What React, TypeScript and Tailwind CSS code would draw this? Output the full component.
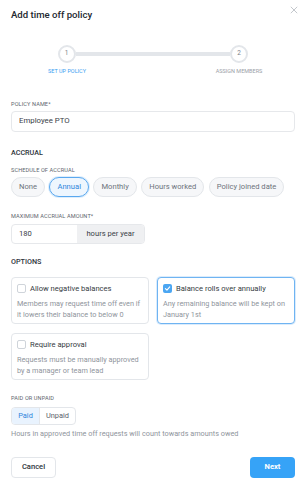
import React from "react";

const F = { fontFamily: "Roboto, 'Liberation Sans', sans-serif" };

function Check({ checked }: { checked?: boolean }) {
  if (checked)
    return (
      <div className="w-[9px] h-[9px] rounded-[2px] bg-[#4ba6f2] flex items-center justify-center shrink-0">
        <svg width="7" height="7" viewBox="0 0 10 10">
          <path d="M2 5.2 L4.2 7.3 L8.2 2.8" fill="none" stroke="white" strokeWidth="1.6" strokeLinecap="round" strokeLinejoin="round" />
        </svg>
      </div>
    );
  return <div className="w-[9px] h-[9px] rounded-[2px] border border-[#cfd4da] bg-white shrink-0" />;
}

function Card({ title, desc, checked }: { title: string; desc: string; checked?: boolean }) {
  return (
    <div
      className={
        "w-[138px] h-[47px] rounded-[4px] border bg-white px-[5px] pt-[6px] " +
        (checked ? "border-[#6fb4f2] shadow-[0_0_0_1px_rgba(111,180,242,0.25)]" : "border-[#e3e6ea]")
      }
    >
      <div className="flex items-center gap-[4px] h-[10px]">
        <Check checked={checked} />
        <span className="text-[7.6px] text-[#353b42] leading-[10px]">{title}</span>
      </div>
      <div className="mt-[4px] text-[7.3px] leading-[11px] text-[#8f959c]">{desc}</div>
    </div>
  );
}

function Pill({ label, active }: { label: string; active?: boolean }) {
  return (
    <div
      className={
        "h-[20px] px-[7px] rounded-full border flex items-center text-[7.6px] " +
        (active
          ? "border-[#5aa8ef] bg-[#eef6fe] text-[#2f86dc] shadow-[0_0_0_1px_rgba(90,168,239,0.2)]"
          : "border-[#e3e6ea] bg-[#f6f7f9] text-[#6d737b]")
      }
    >
      {label}
    </div>
  );
}

function Label({ children }: { children: React.ReactNode }) {
  return <div className="text-[5.6px] leading-[8px] text-[#5e656d] tracking-[0.1px] uppercase">{children}</div>;
}

function Heading({ children }: { children: React.ReactNode }) {
  return <div className="text-[7.2px] leading-[10px] font-medium text-[#2d333a] uppercase">{children}</div>;
}

export default function App() {
  return (
    <div style={F} className="w-[303px] h-[488px] bg-white relative overflow-hidden pl-[11px] pr-[8px]">
      <svg className="absolute right-[5px] top-[6px]" width="8" height="8" viewBox="0 0 10 10">
        <path d="M1 1 L9 9 M9 1 L1 9" stroke="#b4b9bf" strokeWidth="1" />
      </svg>

      <div className="pt-[9px] text-[9.6px] leading-[12px] font-medium text-[#22282f]">Add time off policy</div>

      {/* stepper */}
      <div className="mt-[24px] flex items-center ml-[46.5px] mr-[47px]">
        <div className="w-[18px] h-[18px] rounded-full border-[2px] border-[#e3e6ea] bg-white flex items-center justify-center text-[6.5px] text-[#7a8088] shrink-0">
          1
        </div>
        <div className="flex-1 h-[4px] bg-[#e3e6ea]" />
        <div className="w-[18px] h-[18px] rounded-full border-[2px] border-[#e3e6ea] bg-white flex items-center justify-center text-[6.5px] text-[#7a8088] shrink-0">
          2
        </div>
      </div>
      <div className="mt-[5px] flex justify-between mx-[26px]">
        <div className="w-[60px] text-center text-[5.5px] leading-[7px] text-[#3aa0f2] uppercase whitespace-nowrap">Set up policy</div>
        <div className="w-[60px] text-center text-[5.5px] leading-[7px] text-[#9aa0a7] uppercase whitespace-nowrap">Assign members</div>
      </div>

      <div className="mt-[24.5px]">
        <Label>Policy name*</Label>
      </div>
      <div className="mt-[3px] h-[21px] rounded-[4px] border border-[#e6e8eb] flex items-center px-[7px] text-[7.8px] text-[#3a4047]">
        Employee PTO
      </div>

      <div className="mt-[16px]">
        <Heading>Accrual</Heading>
      </div>
      <div className="mt-[8px]">
        <Label>Schedule of accrual</Label>
      </div>
      <div className="mt-[3px] flex gap-[4.5px]">
        <Pill label="None" />
        <Pill label="Annual" active />
        <Pill label="Monthly" />
        <Pill label="Hours worked" />
        <Pill label="Policy joined date" />
      </div>

      <div className="mt-[15px]">
        <Label>Maximum accrual amount*</Label>
      </div>
      <div className="mt-[4px] w-[134px] h-[20px] rounded-[4px] border border-[#e6e8eb] flex overflow-hidden">
        <div className="w-[65px] flex items-center px-[7px] text-[7.6px] text-[#3a4047]">180</div>
        <div className="flex-1 bg-[#eff0f2] flex items-center justify-center text-[7.6px] text-[#3a4047]">hours per year</div>
      </div>

      <div className="mt-[13px]">
        <Heading>Options</Heading>
      </div>
      <div className="mt-[10px] flex justify-between">
        <Card title="Allow negative balances" desc="Members may request time off even if it lowers their balance to below 0" />
        <Card title="Balance rolls over annually" desc="Any remaining balance will be kept on January 1st" checked />
      </div>
      <div className="mt-[9px] flex">
        <Card title="Require approval" desc="Requests must be manually approved by a manager or team lead" />
      </div>

      <div className="mt-[14px]">
        <Label>Paid or unpaid</Label>
      </div>
      <div className="mt-[5px] flex w-[65px] h-[18px] rounded-[4px] border border-[#e3e6ea] overflow-hidden">
        <div className="w-[28px] bg-[#e9f3fe] text-[#2f86dc] text-[7.4px] flex items-center justify-center border-r border-[#e3e6ea]">Paid</div>
        <div className="flex-1 text-[#5b626b] text-[7.4px] flex items-center justify-center">Unpaid</div>
      </div>
      <div className="mt-[4px] text-[7.3px] leading-[10px] text-[#8f959c]">
        Hours in approved time off requests will count towards amounts owed
      </div>

      <div className="mt-[18px] flex justify-between">
        <div className="w-[45px] h-[21px] rounded-[4px] border border-[#e3e6ea] bg-white flex items-center justify-center text-[7.6px] font-medium text-[#2d333a]">
          Cancel
        </div>
        <div className="w-[45px] h-[21px] rounded-[4px] bg-[#36a3f7] flex items-center justify-center text-[7.6px] font-bold text-white">
          Next
        </div>
      </div>
    </div>
  );
}
